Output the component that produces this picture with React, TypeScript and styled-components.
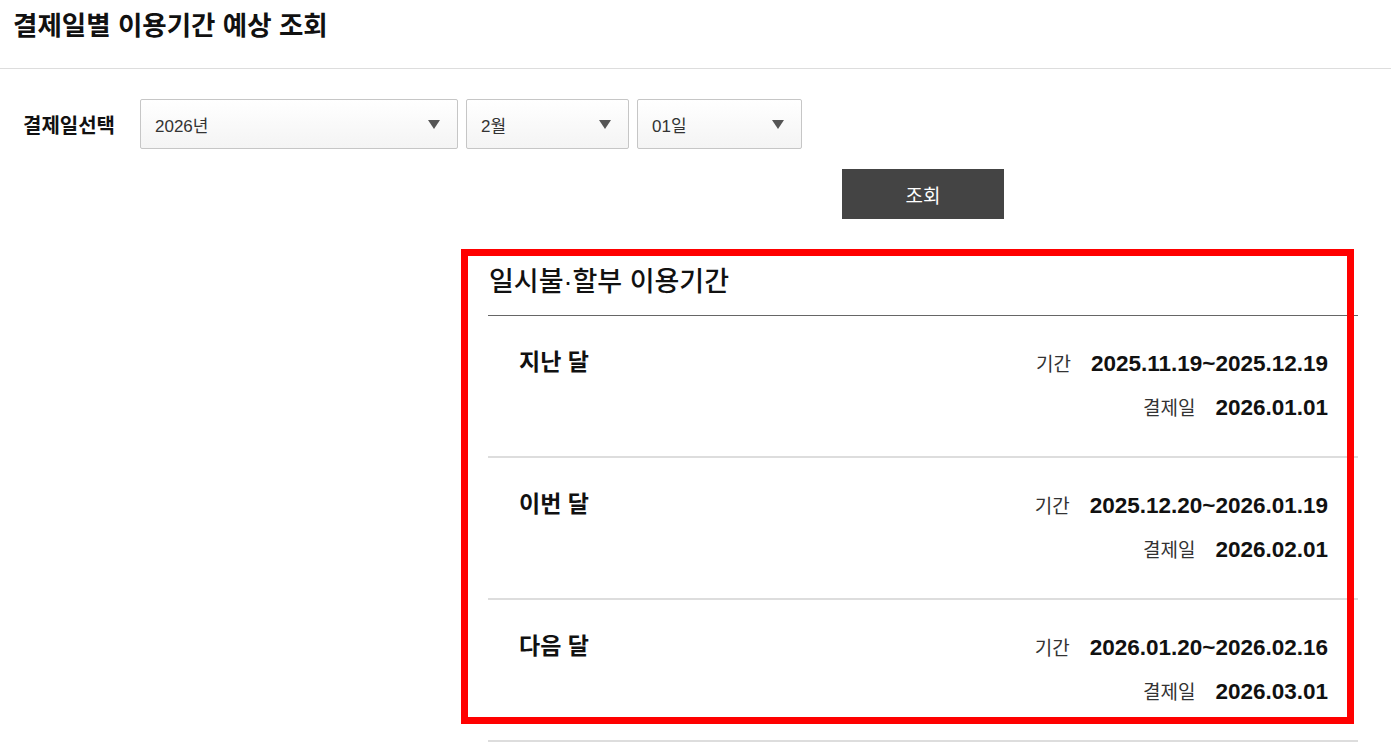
import styled, { createGlobalStyle } from 'styled-components';

const GlobalStyle = createGlobalStyle`
    body {
        margin: 0;
        background: #fff;
        font-family: "Liberation Sans", "Noto Sans CJK KR", sans-serif;
        color: #222;
    }
`

const Page = styled.div`
    position: relative;
    width: 1391px;
    min-height: 751px;
`

const Header = styled.header`
    height: 69px;
    border-bottom: 1px solid #ddd;
    box-sizing: border-box;
    padding-left: 13px;
`

const PageTitle = styled.h1`
    margin: 0;
    font-size: 26.5px;
    font-weight: 700;
    line-height: 52px;
    color: #111;
`

const FormRow = styled.div`
    display: flex;
    align-items: center;
    margin-top: 30px;
    padding-left: 23px;
`

const FormLabel = styled.span`
    width: 117px;
    font-size: 20px;
    font-weight: 700;
    color: #111;
`

const Selects = styled.div`
    display: flex;
    gap: 8px;
`

const SelectBox = styled.div<{ $width: number }>`
    width: ${props => props.$width}px;
    height: 50px;
    box-sizing: border-box;
    border: 1px solid #c6c6c6;
    border-radius: 2px;
    background: linear-gradient(#ffffff, #f4f4f4);
    display: flex;
    align-items: center;
    justify-content: space-between;
    padding: 0 17px 0 14px;
    font-size: 17px;
    color: #333;
`

const Arrow = styled.span`
    width: 0;
    height: 0;
    border-left: 6px solid transparent;
    border-right: 6px solid transparent;
    border-top: 9px solid #555;
`

const ResultColumn = styled.div`
    margin-left: 488px;
    width: 870px;
`

const ButtonRow = styled.div`
    display: flex;
    justify-content: center;
    margin-top: 20px;
`

const SearchButton = styled.button`
    width: 162px;
    height: 50px;
    border: none;
    background: #444;
    color: #fff;
    font-family: inherit;
    font-size: 19px;
    cursor: pointer;
`

const SectionHeading = styled.h2`
    margin: 32px 0 0;
    height: 65px;
    box-sizing: border-box;
    display: flex;
    align-items: center;
    padding: 0 0 8px 1px;
    border-bottom: 1px solid #666;
    font-size: 27px;
    font-weight: 500;
    color: #111;
`

const PeriodRow = styled.div`
    height: 142px;
    box-sizing: border-box;
    display: flex;
    justify-content: space-between;
    align-items: flex-start;
    padding: 26px 30px 0 31px;
    border-bottom: 2px solid #ddd;
`

const RowTitle = styled.span`
    font-size: 23px;
    font-weight: 700;
    line-height: 40px;
    color: #111;
`

const Info = styled.div`
    display: flex;
    flex-direction: column;
    align-items: flex-end;
`

const InfoLine = styled.div`
    display: flex;
    align-items: baseline;
    gap: 20px;
    line-height: 43px;
`

const InfoLabel = styled.span`
    font-size: 19px;
    color: #333;
`

const InfoValue = styled.span`
    font-size: 22.5px;
    font-weight: 700;
    color: #111;
`

const Highlight = styled.div`
    position: absolute;
    left: 461px;
    top: 249px;
    width: 893px;
    height: 475px;
    box-sizing: border-box;
    border: 7px solid #ff0000;
    pointer-events: none;
`

const periods = [
    { name: '지난 달', range: '2025.11.19~2025.12.19', pay: '2026.01.01' },
    { name: '이번 달', range: '2025.12.20~2026.01.19', pay: '2026.02.01' },
    { name: '다음 달', range: '2026.01.20~2026.02.16', pay: '2026.03.01' },
]

export default function App() {
    return (
        <Page>
            <GlobalStyle />
            <Header>
                <PageTitle>결제일별 이용기간 예상 조회</PageTitle>
            </Header>

            <FormRow>
                <FormLabel>결제일선택</FormLabel>
                <Selects>
                    <SelectBox $width={318}>2026년<Arrow /></SelectBox>
                    <SelectBox $width={163}>2월<Arrow /></SelectBox>
                    <SelectBox $width={165}>01일<Arrow /></SelectBox>
                </Selects>
            </FormRow>

            <ResultColumn>
                <ButtonRow>
                    <SearchButton>조회</SearchButton>
                </ButtonRow>

                <SectionHeading>일시불·할부 이용기간</SectionHeading>
                {periods.map(p => (
                    <PeriodRow key={p.name}>
                        <RowTitle>{p.name}</RowTitle>
                        <Info>
                            <InfoLine>
                                <InfoLabel>기간</InfoLabel>
                                <InfoValue>{p.range}</InfoValue>
                            </InfoLine>
                            <InfoLine>
                                <InfoLabel>결제일</InfoLabel>
                                <InfoValue>{p.pay}</InfoValue>
                            </InfoLine>
                        </Info>
                    </PeriodRow>
                ))}
            </ResultColumn>

            <Highlight />
        </Page>
    );
}
